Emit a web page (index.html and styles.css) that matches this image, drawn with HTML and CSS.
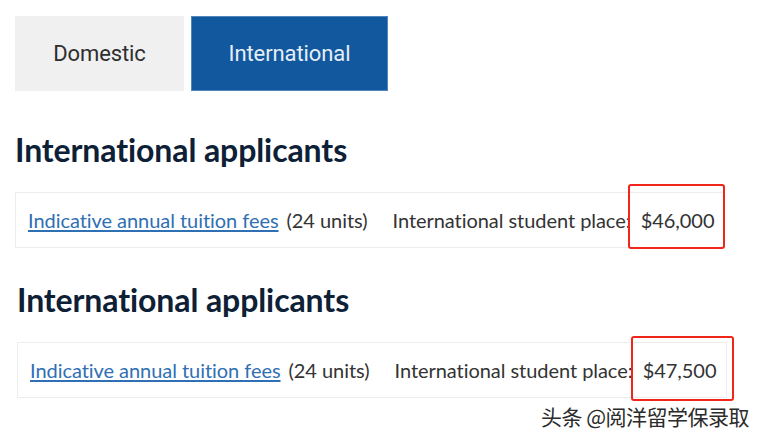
FILE: index.html
```html
<!DOCTYPE html>
<html lang="en">
<head>
<meta charset="utf-8">
<title>Fees</title>
<link rel="stylesheet" href="styles.css">
</head>
<body>
<div class="page">
  <div class="tabs">
    <div class="tab tab-domestic">Domestic</div>
    <div class="tab tab-intl">International</div>
  </div>

  <section class="fees fees-first">
    <h2 class="fees-title">International applicants</h2>
    <div class="fee-row">
      <a class="fee-link" href="#">Indicative annual tuition fees</a>
      <span class="fee-units">(24 units)</span>
      <span class="fee-label">International student place:</span>
      <span class="fee-amount">$46,000</span>
      <span class="mark mark-first"></span>
    </div>
  </section>

  <section class="fees fees-second">
    <h2 class="fees-title">International applicants</h2>
    <div class="fee-row">
      <a class="fee-link" href="#">Indicative annual tuition fees</a>
      <span class="fee-units">(24 units)</span>
      <span class="fee-label">International student place:</span>
      <span class="fee-amount">$47,500</span>
      <span class="mark mark-second"></span>
    </div>
  </section>

  <div class="watermark">头条 @阅洋留学保录取</div>
</div>
</body>
</html>
```

FILE: styles.css
```css
html, body {
  margin: 0;
  padding: 0;
  background: #ffffff;
}

.page {
  position: relative;
  width: 757px;
  height: 437px;
  padding: 16px 0 0 15px;
  box-sizing: border-box;
  font-family: Lato, "Open Sans", sans-serif;
  overflow: hidden;
}

.tabs {
  display: flex;
  gap: 7px;
}

.tab {
  height: 75px;
  display: flex;
  align-items: center;
  justify-content: center;
  font-family: Roboto, "Open Sans", sans-serif;
  font-size: 22px;
  letter-spacing: -0.1px;
}

.tab-domestic {
  width: 169px;
  background: #f0f0f0;
  color: #2e2e2e;
}

.tab-intl {
  width: 197px;
  box-sizing: border-box;
  background: #12589e;
  border: 1px solid #4f86bf;
  color: #e6eef7;
}

.fees-title {
  margin: 0;
  font-family: Lato, sans-serif;
  font-weight: 700;
  font-size: 32px;
  line-height: 36px;
  color: #0d2036;
  letter-spacing: -0.1px;
}

.fees-first {
  margin-top: 41px;
}

.fees-second {
  margin-top: 34px;
  margin-left: 2px;
}

.fee-row {
  position: relative;
  margin-top: 24px;
  width: 710px;
  height: 56px;
  box-sizing: border-box;
  border: 1px solid #ededed;
  display: flex;
  align-items: center;
  padding: 0 0 0 12px;
  font-family: Lato, sans-serif;
  font-size: 20px;
  color: #333333;
  letter-spacing: -0.05px;
}

.fees-second .fee-row {
  margin-top: 24px;
}

.fee-link {
  color: #2f6fb3;
  text-decoration: underline;
  text-underline-offset: 2px;
}

.fee-units {
  margin-left: 8px;
}

.fee-label {
  margin-left: 25px;
}

.fee-amount {
  margin-left: 10px;
  font-size: 20px;
}

.mark {
  position: absolute;
  border: 2px solid #f2251b;
  border-radius: 3px;
  box-sizing: border-box;
}

.mark-first {
  left: 612px;
  top: -9px;
  width: 97px;
  height: 65px;
}

.mark-second {
  left: 613px;
  top: -7px;
  width: 103px;
  height: 65px;
}

.watermark {
  position: absolute;
  right: 8px;
  top: 401px;
  font-family: "Noto Sans CJK SC", sans-serif;
  font-size: 21px;
  color: #2b2b2b;
  letter-spacing: -0.5px;
}
```
